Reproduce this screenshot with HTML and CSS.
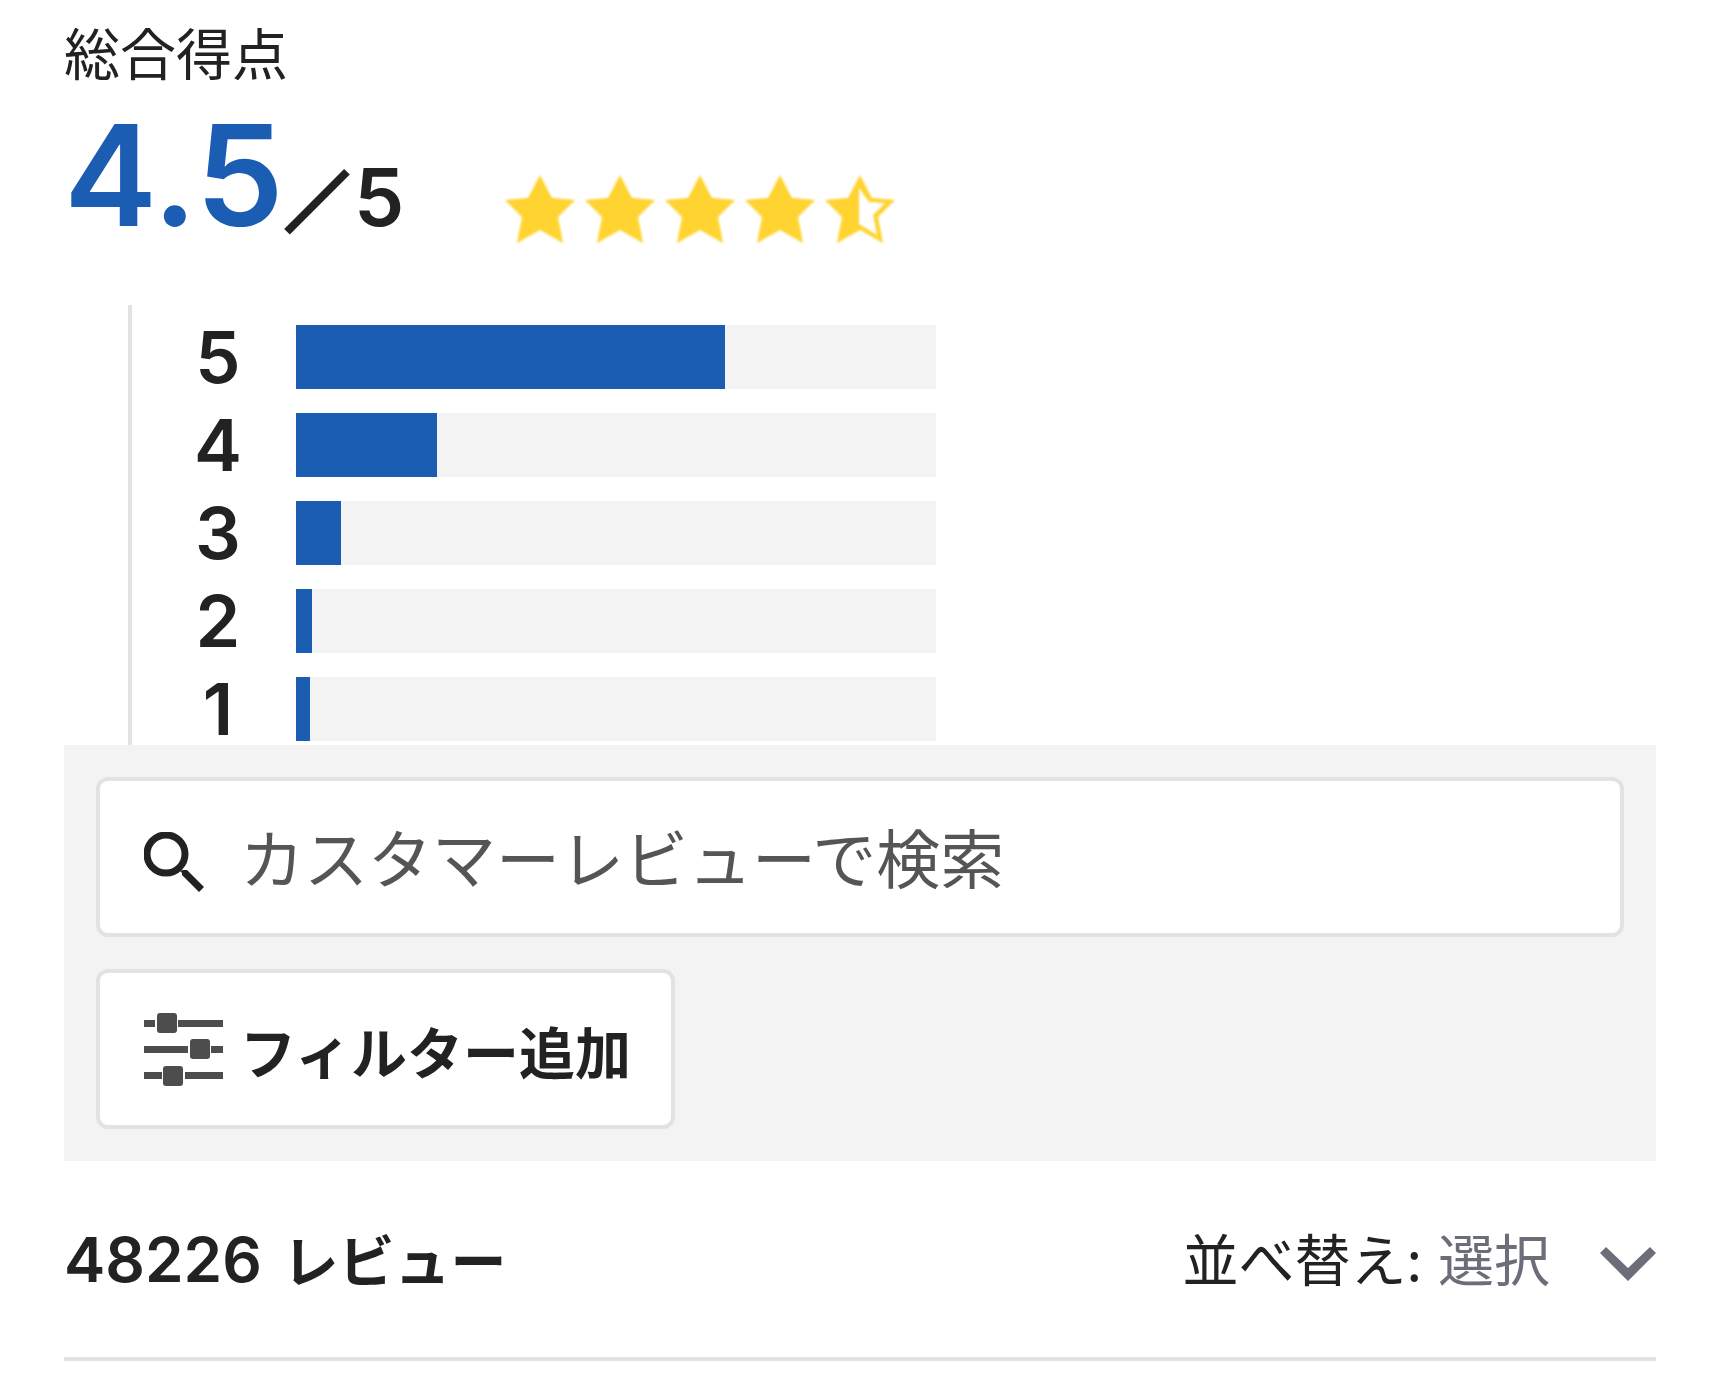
FILE: index.html
```html
<!DOCTYPE html>
<html lang="ja">
<head>
    <meta charset="UTF-8">
    <meta name="viewport" content="width=device-width, initial-scale=1.0">
    <title>カスタマーレビュー</title>
    <link rel="stylesheet" href="styles.css">
</head>
<body>
    <main class="reviews">
        <section class="summary">
            <p class="summary-title">総合得点</p>
            <div class="summary-score">
                <p class="score"><span class="score-value">4.5</span><span class="score-slash">／</span><span class="score-max">5</span></p>
                <div class="stars" role="img" aria-label="4.5">
                    <svg class="star" viewBox="0 0 72 72"><path d="M36 2l12 23 23 2-17 17 5 26-23-13-23 13 5-26L1 27l23-2z"/></svg>
                    <svg class="star" viewBox="0 0 72 72"><path d="M36 2l12 23 23 2-17 17 5 26-23-13-23 13 5-26L1 27l23-2z"/></svg>
                    <svg class="star" viewBox="0 0 72 72"><path d="M36 2l12 23 23 2-17 17 5 26-23-13-23 13 5-26L1 27l23-2z"/></svg>
                    <svg class="star" viewBox="0 0 72 72"><path d="M36 2l12 23 23 2-17 17 5 26-23-13-23 13 5-26L1 27l23-2z"/></svg>
                    <svg class="star" viewBox="0 0 72 72"><path fill-rule="evenodd" d="M36 2l12 23 23 2-17 17 5 26-23-13-23 13 5-26L1 27l23-2zM35 15v36l18 11-4-20 12-12-16-1z"/></svg>
                </div>
            </div>
            <ul class="histogram">
                <li class="histogram-row"><span class="histogram-label">5</span><div class="bar"><div class="bar-fill" style="width: 67%"></div></div></li>
                <li class="histogram-row"><span class="histogram-label">4</span><div class="bar"><div class="bar-fill" style="width: 22%"></div></div></li>
                <li class="histogram-row"><span class="histogram-label">3</span><div class="bar"><div class="bar-fill" style="width: 7%"></div></div></li>
                <li class="histogram-row"><span class="histogram-label">2</span><div class="bar"><div class="bar-fill" style="width: 2.5%"></div></div></li>
                <li class="histogram-row"><span class="histogram-label">1</span><div class="bar"><div class="bar-fill" style="width: 2.2%"></div></div></li>
            </ul>
        </section>

        <form class="toolbar">
            <label class="search" for="search">
                <svg class="search-icon" viewBox="0 0 60 60" aria-hidden="true">
                    <circle cx="22" cy="22" r="19" fill="none" stroke="currentColor" stroke-width="7"/>
                    <path fill="currentColor" d="M36 39l3-1h4l17 17-5 5-17-17v-2z"/>
                </svg>
                <input class="search-input" type="search" id="search" placeholder="カスタマーレビューで検索" aria-label="カスタマーレビューで検索">
            </label>
            <button class="filter" type="button">
                <svg class="filter-icon" viewBox="0 0 80 73" aria-hidden="true">
                    <path d="M0 7h11v7H0zM34 7h45v7H34zM0 33h44v7H0zM67 33h12v7H67zM0 59h18v7H0zM41 59h38v7H41z"/>
                    <rect x="13" y="0" width="20" height="20" rx="3"/>
                    <rect x="46" y="26" width="20" height="20" rx="3"/>
                    <rect x="19" y="53" width="20" height="20" rx="3"/>
                </svg>
                <span>フィルター追加</span>
            </button>
        </form>

        <div class="list-header">
            <h2 class="count"><span class="count-number">48226</span> レビュー</h2>
            <div class="sort">
                <label for="sort">並べ替え:</label>
                <div class="sort-box">
                    <select class="sort-select" id="sort">
                        <option>選択</option>
                    </select>
                    <svg class="sort-arrow" viewBox="0 0 56 34" aria-hidden="true"><path d="M0 6l6-6 22 21L50 0l6 6-28 28z"/></svg>
                </div>
            </div>
        </div>
    </main>
</body>
</html>
```

FILE: styles.css
```css
* {
    box-sizing: border-box;
}

body {
    margin: 0;
    background-color: #ffffff;
    color: #222222;
    font-family: Inter, "Noto Sans CJK JP", sans-serif;
    font-size: 56px;
    line-height: 80px;
}

p, h2, ul {
    margin: 0;
    padding: 0;
}

.reviews {
    padding: 11px 64px;
}

.summary-title {
    font-family: "Noto Sans CJK JP", sans-serif;
}

.summary-score {
    display: flex;
    align-items: flex-end;
    gap: 100px;
    padding-top: 36px;
}

.score {
    display: flex;
    align-items: baseline;
    font-weight: 600;
    line-height: 96px;
}

.score-value {
    font-size: 140px;
    color: #1a5db3;
}

.score-slash {
    margin: 0 6px 0 2px;
    font-family: "Noto Sans CJK JP", sans-serif;
    font-size: 62px;
    line-height: 80px;
    -webkit-text-stroke: 5px #222222;
}

.score-max {
    font-size: 80px;
}

.stars {
    display: flex;
    gap: 8px;
}

.star {
    width: 72px;
    height: 72px;
    fill: #ffd330;
    filter: blur(1px);
}

.histogram {
    display: flex;
    flex-direction: column;
    gap: 24px;
    margin: 60px 0 0 64px;
    padding: 20px 0 4px 44px;
    border-left: 4px solid #e2e2e2;
    list-style: none;
}

.histogram-row {
    display: flex;
    align-items: center;
    gap: 36px;
    height: 64px;
}

.histogram-label {
    width: 84px;
    font-size: 72px;
    font-weight: 600;
    text-align: center;
}

.bar {
    width: 640px;
    height: 64px;
    background-color: #f3f3f3;
}

.bar-fill {
    height: 100%;
    background-color: #1a5db3;
}

.toolbar {
    display: flex;
    flex-direction: column;
    align-items: flex-start;
    gap: 32px;
    padding: 32px;
    background-color: #f3f3f3;
}

.search,
.filter {
    display: flex;
    align-items: center;
    height: 160px;
    padding: 0 44px;
    border: 4px solid #e2e2e2;
    border-radius: 12px;
    background-color: #ffffff;
}

.search {
    width: 100%;
    gap: 36px;
}

.search-icon {
    flex: none;
    width: 60px;
    height: 60px;
    margin-top: 10px;
}

.search-input {
    flex: 1;
    min-width: 0;
    height: 92px;
    margin-bottom: 4px;
    padding: 0;
    border: 0;
    outline: 0;
    background: none;
    font-family: "Noto Sans CJK JP", sans-serif;
    font-size: 64px;
    color: #222222;
}

.search-input::placeholder {
    color: #555555;
    opacity: 1;
}

.filter {
    gap: 16px;
    padding-right: 40px;
    color: #222222;
    font-family: "Noto Sans CJK JP", sans-serif;
    font-size: 56px;
    font-weight: bold;
}

.filter-icon {
    width: 80px;
    height: 73px;
    fill: #4d4d4d;
}

.list-header {
    display: flex;
    align-items: center;
    justify-content: space-between;
    height: 200px;
    border-bottom: 4px solid #e2e2e2;
}

.count {
    font-family: "Noto Sans CJK JP", sans-serif;
    font-size: 56px;
}

.count-number {
    margin-right: 8px;
    font-family: Inter, sans-serif;
    font-size: 62px;
    font-weight: 600;
}

.sort {
    display: flex;
    align-items: center;
    gap: 16px;
    padding-bottom: 4px;
    font-family: "Noto Sans CJK JP", sans-serif;
}

.sort-box {
    display: flex;
    align-items: center;
    position: relative;
}

.sort-select {
    appearance: none;
    height: 80px;
    padding: 0 106px 0 0;
    border: 0;
    background: none;
    color: #6b6e78;
    font: inherit;
}

.sort-arrow {
    position: absolute;
    top: 30px;
    right: 0;
    width: 56px;
    height: 34px;
    fill: #6b6e78;
    pointer-events: none;
}
```
